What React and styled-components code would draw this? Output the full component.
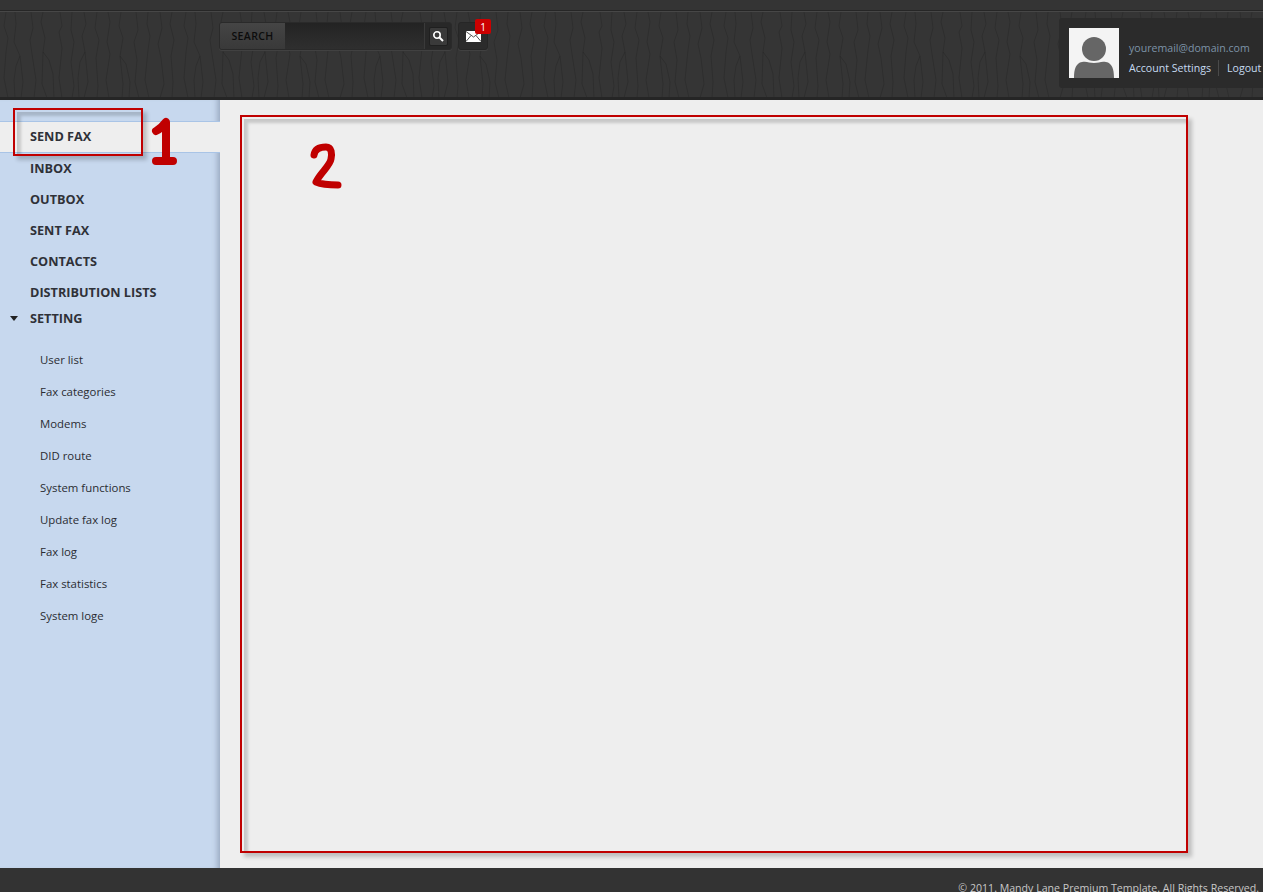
import React from 'react'
import styled, { createGlobalStyle, css } from 'styled-components'

const GlobalStyle = createGlobalStyle`
  html, body {
    margin: 0;
    padding: 0;
    height: 100%;
    overflow: hidden;
    background: #eeeeee;
    font-family: "Open Sans", "Noto Sans", sans-serif;
  }
`

const barkTile = encodeURIComponent(`<svg xmlns="http://www.w3.org/2000/svg" width="180" height="86" fill="none" stroke="#000" stroke-opacity=".14" stroke-width="1">
<path d="M6 0L4 14L8 26L6 40L4 66L8 86"/>
<path d="M15 0L16 12L14 30L20 44L23 70L21 86"/>
<path d="M20 44L16 54L14 68L15 86"/>
<path d="M31 0L33 16L30 28L32 42L36 68L34 86"/>
<path d="M43 0L41 10L45 26L43 40L42 72L47 86"/>
<path d="M43 40L49 48L53 62L54 86"/>
<path d="M60 0L62 14L59 20L62 36L59 66L62 86"/>
<path d="M72 0L71 18L74 30L71 50L74 74L72 86"/>
<path d="M84 0L86 12L82 24L85 40L88 70L84 86"/>
<path d="M85 40L80 50L78 66L79 86"/>
<path d="M97 0L95 16L99 28L96 46L98 74L97 86"/>
<path d="M108 0L110 10L107 30L110 42L106 68L109 86"/>
<path d="M121 0L119 14L123 26L120 44L123 72L122 86"/>
<path d="M120 44L126 52L130 70L129 86"/>
<path d="M136 0L138 18L134 30L137 48L135 70L139 86"/>
<path d="M148 0L147 12L150 24L148 38L145 68L149 86"/>
<path d="M160 0L162 16L158 32L161 46L164 72L160 86"/>
<path d="M172 0L170 12L174 28L171 44L173 70L172 86"/>
</svg>`)

const Page = styled.div`
  width: 1263px;
  height: 892px;
  display: flex;
  flex-direction: column;
  position: relative;
  overflow: hidden;
`

const TopStrip = styled.div`
  height: 12px;
  flex: none;
  box-sizing: border-box;
  background: #343434;
  border-bottom: 1px solid #474747;
  box-shadow: inset 0 -1px 0 #262626;
`

const Header = styled.header`
  height: 88px;
  flex: none;
  display: flex;
  justify-content: space-between;
  box-sizing: border-box;
  border-bottom: 3px solid #252525;
  background-color: #353535;
  background-image: url("data:image/svg+xml,${barkTile}");
`

const SearchArea = styled.div`
  display: flex;
  align-items: flex-start;
  gap: 6px;
  margin: 10px 0 0 219px;
`

const SearchBox = styled.div`
  width: 233px;
  height: 28px;
  display: flex;
  box-sizing: border-box;
  border: 1px solid #2a2a2a;
  border-radius: 3px;
  box-shadow: 0 1px 0 #414141;
  overflow: hidden;
`

const SearchLabel = styled.div`
  width: 65px;
  flex: none;
  display: flex;
  align-items: center;
  justify-content: center;
  padding-bottom: 1px;
  box-sizing: border-box;
  background: linear-gradient(#454545, #393939);
  color: #0c0c0c;
  font-size: 10.5px;
  font-weight: 600;
  letter-spacing: 0.4px;
`

const SearchInput = styled.div`
  flex: 1;
  background: linear-gradient(#232323, #2f2f2f);
  border-right: 1px solid #3a3a3a;
`

const SearchAction = styled.div`
  width: 26px;
  flex: none;
  display: flex;
  align-items: center;
  justify-content: center;
  background: #282828;
`

const SearchButton = styled.div`
  width: 19px;
  height: 19px;
  display: flex;
  align-items: center;
  justify-content: center;
  box-sizing: border-box;
  background: #3a3a3a;
  border: 1px solid #1f1f1f;
  border-radius: 2px;
`

const MailButton = styled.div`
  width: 30px;
  height: 28px;
  position: relative;
  display: flex;
  align-items: center;
  justify-content: center;
  box-sizing: border-box;
  background: #2b2b2b;
  border: 1px solid #262626;
  border-radius: 3px;
  box-shadow: 0 1px 0 #414141;
`

const Badge = styled.span`
  position: absolute;
  top: -4px;
  right: -4px;
  width: 16px;
  height: 15px;
  display: flex;
  align-items: center;
  justify-content: center;
  background: #cc0000;
  border-radius: 2px;
  color: #fff;
  font-size: 10px;
  line-height: 1;
`

const Profile = styled.div`
  width: 204px;
  height: 70px;
  margin-top: 6px;
  display: flex;
  gap: 10px;
  box-sizing: border-box;
  padding: 10px 0 0 10px;
  background: #2b2b2b;
  border-radius: 3px 0 0 3px;
`

const Avatar = styled.div`
  width: 50px;
  height: 50px;
  flex: none;
  background: #f4f4f4;
`

const ProfileText = styled.div`
  display: flex;
  flex-direction: column;
  gap: 4px;
  padding-top: 12px;
  font-size: 10.6px;
  line-height: 16px;
`

const Email = styled.div`
  color: #7d93a8;
`

const ProfileLinks = styled.div`
  display: flex;
  color: #c6daf0;
  white-space: nowrap;
`

const ProfileLink = styled.span`
  padding-right: ${p => (p.$first ? '7px' : '0')};
  padding-left: ${p => (p.$first ? '0' : '8px')};
  border-right: ${p => (p.$first ? '1px solid #4a4a4a' : 'none')};
`

const Body = styled.div`
  flex: 1;
  min-height: 0;
  display: flex;
`

const Sidebar = styled.nav`
  width: 220px;
  flex: none;
  box-sizing: border-box;
  padding-top: 21px;
  background: #c7d8ee;
  box-shadow: inset -7px 0 6px -5px #93a3b9;
`

const MainItem = styled.div`
  height: ${p => p.$height || 31}px;
  display: flex;
  align-items: center;
  box-sizing: border-box;
  padding: 0 0 4px 30px;
  font-size: 12.7px;
  font-weight: 700;
  color: #2f3138;
  ${p => p.$active && css`
    height: 32px;
    margin-bottom: 1px;
    padding-bottom: 2px;
    background: #eeeeee;
    border-top: 1px solid #a9c4e6;
    border-bottom: 1px solid #a9c4e6;
  `}
`

const Caret = styled.span`
  position: absolute;
  left: 10px;
  margin-top: 1px;
  width: 0;
  height: 0;
  border-left: 4px solid transparent;
  border-right: 4px solid transparent;
  border-top: 5px solid #222;
`

const SubList = styled.div`
  padding-top: 14px;
`

const SubItem = styled.div`
  height: 32px;
  display: flex;
  align-items: center;
  padding: 0 0 2px 40px;
  box-sizing: border-box;
  font-size: 11.4px;
  color: #2a2c32;
`

const Main = styled.main`
  flex: 1;
  padding: 15px 0 0 20px;
  background: #eeeeee;
`

const marker = css`
  box-sizing: border-box;
  border: 2px solid #c00000;
  box-shadow: 4px 4px 4px rgba(0, 0, 0, 0.2);

  &::before {
    content: '';
    position: absolute;
    inset: 2px 0 0 2px;
    box-shadow: inset 4px 4px 3px rgba(0, 0, 0, 0.16);
  }
`

const MarkedArea = styled.div`
  width: 948px;
  height: 738px;
  position: relative;
  ${marker}
`

const MarkerBox = styled.div`
  position: absolute;
  left: 13px;
  top: 108px;
  width: 130px;
  height: 48px;
  ${marker}
`

const Digit = styled.svg`
  position: absolute;
  left: ${p => p.$left}px;
  top: ${p => p.$top}px;
`

const Footer = styled.footer`
  height: 24px;
  flex: none;
  display: flex;
  justify-content: flex-end;
  box-sizing: border-box;
  padding: 12px 4px 0 0;
  background: #333333;
  color: #c8c8c8;
  font-size: 10.6px;
  line-height: 16px;
  overflow: hidden;
`

const mainItems = ['INBOX', 'OUTBOX', 'SENT FAX', 'CONTACTS', 'DISTRIBUTION LISTS']
const subItems = [
  'User list',
  'Fax categories',
  'Modems',
  'DID route',
  'System functions',
  'Update fax log',
  'Fax log',
  'Fax statistics',
  'System loge',
]

const SearchIcon = () => (
  <svg width="12" height="12" viewBox="0 0 12 12" fill="none">
    <circle cx="5" cy="5" r="3.2" stroke="#fff" strokeWidth="1.6" />
    <path d="M7.5 7.5L11 11" stroke="#fff" strokeWidth="2" />
  </svg>
)

const MailIcon = () => (
  <svg width="15" height="11" viewBox="0 0 15 11">
    <rect width="15" height="11" fill="#fff" />
    <path d="M0 0.5L7.5 6L15 0.5M0 10.5L5 4.5M15 10.5L10 4.5" stroke="#555" strokeWidth="1" fill="none" />
  </svg>
)

const AvatarIcon = () => (
  <svg width="50" height="50" viewBox="0 0 50 50">
    <circle cx="25" cy="21" r="12" fill="#666" />
    <path d="M5 50C5 41 7 35 13 34C18 33 20 35 25 35C30 35 32 33 37 34C43 35 45 41 45 50Z" fill="#666" />
  </svg>
)

function App() {
  return (
    <Page>
      <GlobalStyle />
      <TopStrip />
      <Header>
        <SearchArea>
          <SearchBox>
            <SearchLabel>SEARCH</SearchLabel>
            <SearchInput />
            <SearchAction>
              <SearchButton>
                <SearchIcon />
              </SearchButton>
            </SearchAction>
          </SearchBox>
          <MailButton>
            <MailIcon />
            <Badge>1</Badge>
          </MailButton>
        </SearchArea>
        <Profile>
          <Avatar>
            <AvatarIcon />
          </Avatar>
          <ProfileText>
            <Email>youremail@domain.com</Email>
            <ProfileLinks>
              <ProfileLink $first>Account Settings</ProfileLink>
              <ProfileLink>Logout</ProfileLink>
            </ProfileLinks>
          </ProfileText>
        </Profile>
      </Header>
      <Body>
        <Sidebar>
          <MainItem $active>SEND FAX</MainItem>
          {mainItems.map(item => (
            <MainItem key={item}>{item}</MainItem>
          ))}
          <MainItem $height={21}>
            <Caret />
            SETTING
          </MainItem>
          <SubList>
            {subItems.map(item => (
              <SubItem key={item}>{item}</SubItem>
            ))}
          </SubList>
        </Sidebar>
        <Main>
          <MarkedArea />
        </Main>
      </Body>
      <Footer>© 2011. Mandy Lane Premium Template. All Rights Reserved.</Footer>
      <MarkerBox />
      <Digit $left={148} $top={113} width="32" height="54" viewBox="0 0 32 54" fill="none">
        <path
          d="M8 18C12 16 15 13 18 9C18 20 18 34 18 46M8 48C14 48 20 48 25 48"
          stroke="#c00000"
          strokeWidth="8"
          strokeLinecap="round"
          strokeLinejoin="round"
        />
      </Digit>
      <Digit $left={307} $top={140} width="38" height="52" viewBox="0 0 38 52" fill="none">
        <path
          d="M7 15C8 8 14 7 19 7C25 7 25 14 24 19C23 26 13 33 9 42C16 45 24 45 31 45"
          stroke="#c00000"
          strokeWidth="7"
          strokeLinecap="round"
          strokeLinejoin="round"
        />
      </Digit>
    </Page>
  )
}

export default App
